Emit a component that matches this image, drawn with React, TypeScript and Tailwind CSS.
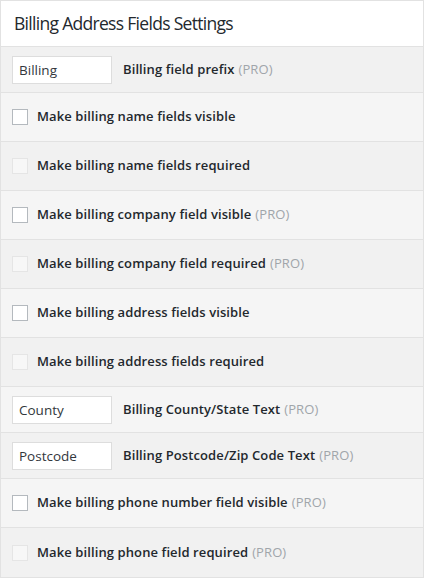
const rows: Array<
  | { kind: "input"; value: string; label: string; pro?: boolean }
  | { kind: "check"; label: string; disabled?: boolean; pro?: boolean }
> = [
  { kind: "input", value: "Billing", label: "Billing field prefix", pro: true },
  { kind: "check", label: "Make billing name fields visible" },
  { kind: "check", label: "Make billing name fields required", disabled: true },
  { kind: "check", label: "Make billing company field visible", pro: true },
  { kind: "check", label: "Make billing company field required", disabled: true, pro: true },
  { kind: "check", label: "Make billing address fields visible" },
  { kind: "check", label: "Make billing address fields required", disabled: true },
  { kind: "input", value: "County", label: "Billing County/State Text", pro: true },
  { kind: "input", value: "Postcode", label: "Billing Postcode/Zip Code Text", pro: true },
  { kind: "check", label: "Make billing phone number field visible", pro: true },
  { kind: "check", label: "Make billing phone field required", disabled: true, pro: true },
];

const Pro = () => <span className="font-normal text-[#a0a5aa] ml-1">(PRO)</span>;

export default function App() {
  return (
    <div className="w-[424px] h-[578px] bg-white font-['Open_Sans',sans-serif] text-[#23282d]">
      <div className="border border-[#e2e2e2]">
        <div className="h-[46px] flex items-center px-[13px] bg-white border-b border-[#e2e2e2]">
          <h2 className="text-[17.5px] tracking-[-0.7px]">Billing Address Fields Settings</h2>
        </div>
        {rows.map((r, i) => (
          <div
            key={i}
            className={
              "flex items-center px-[11px] border-b border-[#e2e2e2] last:border-b-0 " +
              (r.kind === "input" ? "h-[46px] " : "h-[49px] ") +
              (i % 2 === 0 ? "bg-[#f1f1f1]" : "bg-[#f5f5f5]")
            }
          >
            {r.kind === "input" ? (
              <>
                <input
                  readOnly
                  value={r.value}
                  className="w-[100px] h-[28px] bg-white border border-[#dddddd] px-[6px] text-[13.5px] text-[#32373c] outline-none"
                />
                <span className="ml-[11px] text-[13px] font-semibold tracking-[0.1px]">
                  {r.label}
                  {r.pro && <Pro />}
                </span>
              </>
            ) : (
              <>
                <span
                  className={
                    "w-4 h-4 shrink-0 border " +
                    (r.disabled ? "border-[#e5e5e5] bg-[#f7f7f7]" : "border-[#b4b9be] bg-white")
                  }
                />
                <span className="ml-[9px] text-[13px] font-semibold tracking-[0.1px]">
                  {r.label}
                  {r.pro && <Pro />}
                </span>
              </>
            )}
          </div>
        ))}
      </div>
    </div>
  );
}
